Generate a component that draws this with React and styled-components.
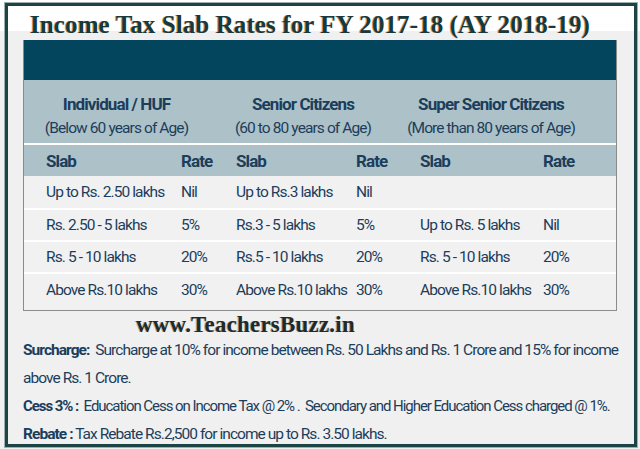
import React from "react";
import styled, { createGlobalStyle } from "styled-components";

const GlobalStyle = createGlobalStyle`
  html, body { margin: 0; padding: 0; }
  body {
    width: 640px;
    height: 449px;
    overflow: hidden;
    background: linear-gradient(to bottom, #ffffff 0, #ffffff 31px, #f0f0f0 31px);
  }
`;

const COND = `Roboto, "Liberation Sans", Arial, sans-serif`;
const NAVY = "#1c3d5b";

const Frame = styled.div`
  box-sizing: border-box;
  width: 632px;
  height: 444px;
  margin: 3px 0 0 5px;
  border: 3px solid #1d4444;
  box-shadow: 0 0 0 1px #9fb0b0;
  background: linear-gradient(to bottom, #ffffff 0, #ffffff 25px, #f0f0f0 25px);
  display: flex;
  flex-direction: column;
`;

const Title = styled.h1`
  margin: 4px 0 0;
  padding-left: 22px;
  font-family: "Liberation Serif", "Times New Roman", serif;
  font-weight: 700;
  font-size: 25px;
  letter-spacing: 0.1px;
  line-height: 30px;
  color: #15393d;
  text-shadow: -1px 0 0 #d39a5c;
  white-space: nowrap;
`;

const Table = styled.div`
  box-sizing: border-box;
  width: 594px;
  margin: 0 0 0 15px;
  border: 1px solid #8c8c8c;
  border-top: none;
  font-family: ${COND};
  letter-spacing: -0.9px;
  color: ${NAVY};
`;

const Band = styled.div`
  height: 40px;
  background: #02455d;
`;

const GroupRow = styled.div`
  display: grid;
  grid-template-columns: 185px 188px 188px;
  padding: 12px 0 2px;
  background: #acc2c8;
  border-bottom: 2px solid #ffffff;
`;

const Group = styled.div`
  text-align: center;
  white-space: nowrap;
`;

const GroupName = styled.div`
  font-weight: 700;
  font-size: 17px;
  line-height: 24px;
`;

const GroupAge = styled.div`
  font-size: 15.5px;
  line-height: 25px;
`;

const Row = styled.div`
  display: grid;
  grid-template-columns: 135px 55px 120px 64px 123px 1fr;
  padding-left: 22px;
  align-items: center;
  height: ${(p) => p.$h}px;
  padding-bottom: ${(p) => p.$pb || 0}px;
  background: ${(p) => (p.$head ? "#acc2c8" : "#f1f1f1")};
  border-top: ${(p) => (p.$sep ? "2px solid #ffffff" : "none")};
  font-weight: ${(p) => (p.$head ? 700 : 400)};
  font-size: ${(p) => (p.$head ? 17 : 15.5)}px;
  white-space: nowrap;
`;

const Cell = styled.div``;

const Site = styled.div`
  margin: 2px 0 0 128px;
  font-family: "Liberation Serif", "Times New Roman", serif;
  font-weight: 700;
  font-size: 23px;
  letter-spacing: 0.2px;
  line-height: 24px;
  color: #1d2b2b;
  text-shadow: -1px 0 0 #b9a58a;
`;

const Notes = styled.div`
  margin-top: -1px;
  padding-left: 15px;
  font-family: ${COND};
  line-height: 28px;
  color: ${NAVY};
`;

const NoteLine = styled.div`
  white-space: pre;
  font-size: ${(p) => (p.$tight ? 15 : 15.5)}px;
  letter-spacing: ${(p) => (p.$tight ? -1.05 : -0.95)}px;
`;

const Label = styled.b`
  font-weight: 700;
`;

const rows = [
  ["Up to Rs. 2.50 lakhs", "Nil", "Up to Rs.3 lakhs", "Nil", "", ""],
  ["Rs. 2.50 - 5 lakhs", "5%", "Rs.3 - 5 lakhs", "5%", "Up to Rs. 5 lakhs", "Nil"],
  ["Rs. 5 - 10 lakhs", "20%", "Rs.5 - 10 lakhs", "20%", "Rs. 5 - 10 lakhs", "20%"],
  ["Above Rs.10 lakhs", "30%", "Above Rs.10 lakhs", "30%", "Above Rs.10 lakhs", "30%"],
];
const heights = [32, 30, 30, 32];
const groups = [
  ["Individual / HUF", "(Below 60 years of Age)"],
  ["Senior Citizens", "(60 to 80 years of Age)"],
  ["Super Senior Citizens", "(More than 80 years of Age)"],
];

export default function App() {
  return (
    <>
      <GlobalStyle />
      <Frame>
        <Title>Income Tax Slab Rates for FY 2017-18 (AY 2018-19)</Title>
        <Table>
          <Band />
          <GroupRow>
            {groups.map(([n, a]) => (
              <Group key={n}>
                <GroupName>{n}</GroupName>
                <GroupAge>{a}</GroupAge>
              </Group>
            ))}
          </GroupRow>
          <Row $head $h={31}>
            {["Slab", "Rate", "Slab", "Rate", "Slab", "Rate"].map((t, i) => (
              <Cell key={i}>{t}</Cell>
            ))}
          </Row>
          {rows.map((r, i) => (
            <Row key={i} $h={heights[i]} $sep={i > 0} $pb={i === 3 ? 4 : 0}>
              {r.map((t, j) => (
                <Cell key={j}>{t}</Cell>
              ))}
            </Row>
          ))}
        </Table>
        <Site>www.TeachersBuzz.in</Site>
        <Notes>
          <NoteLine>
            <Label>Surcharge:</Label>{"  Surcharge at 10% for income between Rs. 50 Lakhs and Rs. 1 Crore and 15% for income"}
          </NoteLine>
          <NoteLine>above Rs. 1 Crore.</NoteLine>
          <NoteLine $tight>
            <Label>Cess 3% :</Label>{"  Education Cess on Income Tax @ 2% .  Secondary and Higher Education Cess charged @ 1%."}
          </NoteLine>
          <NoteLine>
            <Label>Rebate :</Label>{" Tax Rebate Rs.2,500 for income up to Rs. 3.50 lakhs."}
          </NoteLine>
        </Notes>
      </Frame>
    </>
  );
}
